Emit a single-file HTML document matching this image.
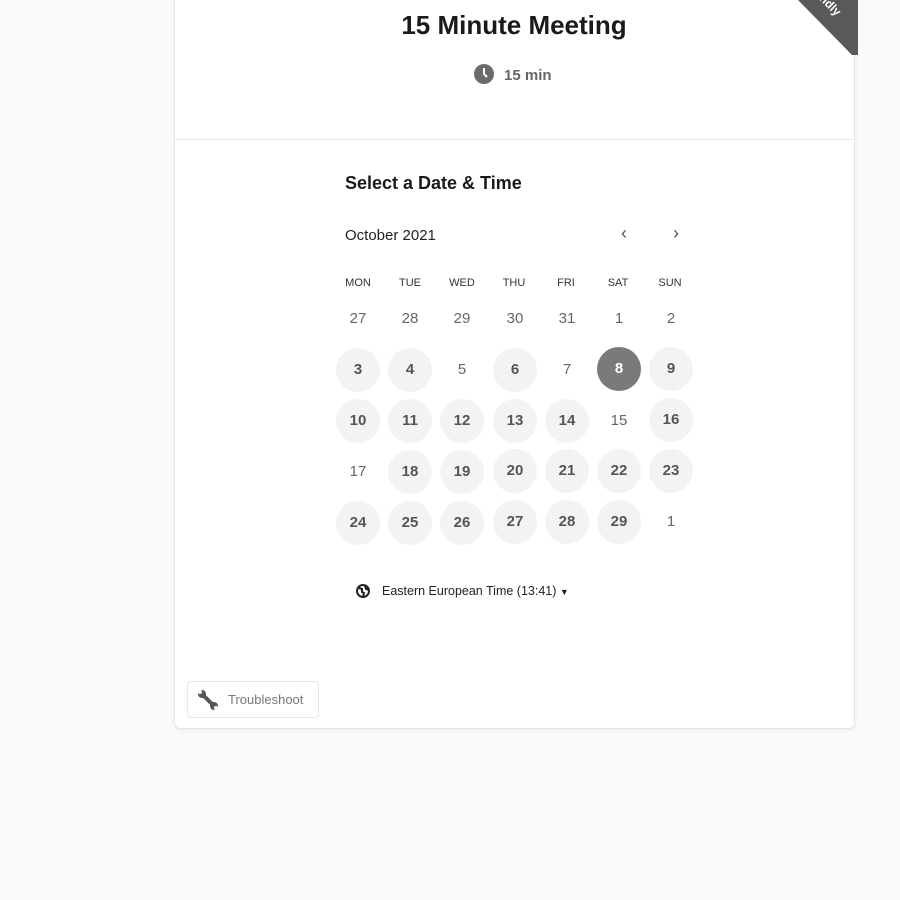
<!DOCTYPE html>
<html><head><style>
body{margin:0;width:900px;height:900px;background:#fafafa;font-family:"Liberation Sans",sans-serif;position:relative;overflow:hidden}
.card{position:absolute;left:174px;top:-10px;width:679px;height:737px;background:#fff;border:1px solid #e6e6e6;border-radius:6px;box-shadow:0 1px 4px rgba(0,0,0,.06)}
.a{position:absolute}
.d{position:absolute;width:44px;height:44px;border-radius:50%;text-align:center;line-height:44px;font-size:15px;color:#666;transform:translate(-22px,-22px)}
.av{background:#f3f3f3;font-weight:bold;color:#555}
.sel{background:#7a7a7a;color:#fff;font-weight:bold}
.h{position:absolute;font-size:11px;color:#333;transform:translateX(-50%)}
</style></head><body>
<div class="card"></div>
<div class="a" style="left:798px;top:0;width:60px;height:55px;background:#595959;clip-path:polygon(0 0,100% 0,100% 100%,90% 100%)"></div>
<div class="a" style="left:818px;top:-2px;color:#fff;font-size:12px;font-weight:bold;transform:rotate(45deg)">ndly</div>
<div class="a" style="left:0;width:1028px;top:10px;text-align:center;font-size:26px;font-weight:bold;color:#1a1a1a">15 Minute Meeting</div>
<svg class="a" style="left:474px;top:64px" width="20" height="20" viewBox="0 0 20 20"><circle cx="10" cy="10" r="10" fill="#6b6b6b"/><path d="M10 4v6l3 3" stroke="#fff" stroke-width="2" fill="none"/></svg>
<div class="a" style="left:504px;top:67px;font-size:15px;font-weight:bold;color:#666">15 min</div>
<div class="a" style="left:175px;top:139px;width:678px;height:1px;background:#e8e8e8"></div>
<div class="a" style="left:345px;top:173px;font-size:18px;font-weight:bold;color:#1a1a1a">Select a Date &amp; Time</div>
<div class="a" style="left:345px;top:227px;font-size:15px;color:#222">October 2021</div>
<div class="a" style="left:621px;top:223px;font-size:18px;color:#555">‹</div>
<div class="a" style="left:673px;top:223px;font-size:18px;color:#555">›</div>
<div class="h" style="left:358px;top:277px">MON</div><div class="h" style="left:410px;top:277px">TUE</div><div class="h" style="left:462px;top:277px">WED</div><div class="h" style="left:514px;top:277px">THU</div><div class="h" style="left:566px;top:277px">FRI</div><div class="h" style="left:618px;top:277px">SAT</div><div class="h" style="left:670px;top:277px">SUN</div>
<div class="d" style="left:358px;top:319px">27</div><div class="d" style="left:410px;top:319px">28</div><div class="d" style="left:462px;top:319px">29</div><div class="d" style="left:515px;top:319px">30</div><div class="d" style="left:567px;top:319px">31</div><div class="d" style="left:619px;top:319px">1</div><div class="d" style="left:671px;top:319px">2</div>
<div class="d av" style="left:358px;top:370px">3</div><div class="d av" style="left:410px;top:370px">4</div><div class="d" style="left:462px;top:370px">5</div><div class="d av" style="left:515px;top:370px">6</div><div class="d" style="left:567px;top:370px">7</div><div class="d sel" style="left:619px;top:369px">8</div><div class="d av" style="left:671px;top:369px">9</div>
<div class="d av" style="left:358px;top:421px">10</div><div class="d av" style="left:410px;top:421px">11</div><div class="d av" style="left:462px;top:421px">12</div><div class="d av" style="left:515px;top:421px">13</div><div class="d av" style="left:567px;top:421px">14</div><div class="d" style="left:619px;top:421px">15</div><div class="d av" style="left:671px;top:420px">16</div>
<div class="d" style="left:358px;top:472px">17</div><div class="d av" style="left:410px;top:472px">18</div><div class="d av" style="left:462px;top:472px">19</div><div class="d av" style="left:515px;top:471px">20</div><div class="d av" style="left:567px;top:471px">21</div><div class="d av" style="left:619px;top:471px">22</div><div class="d av" style="left:671px;top:471px">23</div>
<div class="d av" style="left:358px;top:523px">24</div><div class="d av" style="left:410px;top:523px">25</div><div class="d av" style="left:462px;top:523px">26</div><div class="d av" style="left:515px;top:522px">27</div><div class="d av" style="left:567px;top:522px">28</div><div class="d av" style="left:619px;top:522px">29</div><div class="d" style="left:671px;top:522px">1</div>
<svg class="a" style="left:356px;top:584px" width="14" height="14" viewBox="0 0 14 14"><circle cx="7" cy="7" r="6" fill="none" stroke="#222" stroke-width="2"/><path d="M3 4l3 1 0 3 2 1-1 4M9 2l1 3 3 1" stroke="#222" stroke-width="2" fill="none"/></svg>
<div class="a" style="left:382px;top:584px;font-size:12.5px;color:#222">Eastern European Time (13:41) <span style="font-size:9px">▼</span></div>
<div class="a" style="left:187px;top:681px;width:130px;height:35px;border:1px solid #e6e6e6;border-radius:4px"></div>
<svg class="a" style="left:196px;top:688px" width="24" height="24" viewBox="0 0 24 24"><circle cx="6" cy="6" r="4" fill="#555"/><circle cx="18" cy="18" r="4" fill="#555"/><path d="M6 6l12 12" stroke="#555" stroke-width="4"/><circle cx="4" cy="4" r="2" fill="#fff"/><circle cx="20" cy="20" r="2" fill="#fff"/></svg>
<div class="a" style="left:228px;top:692px;font-size:13px;color:#777">Troubleshoot</div>
</body></html>
